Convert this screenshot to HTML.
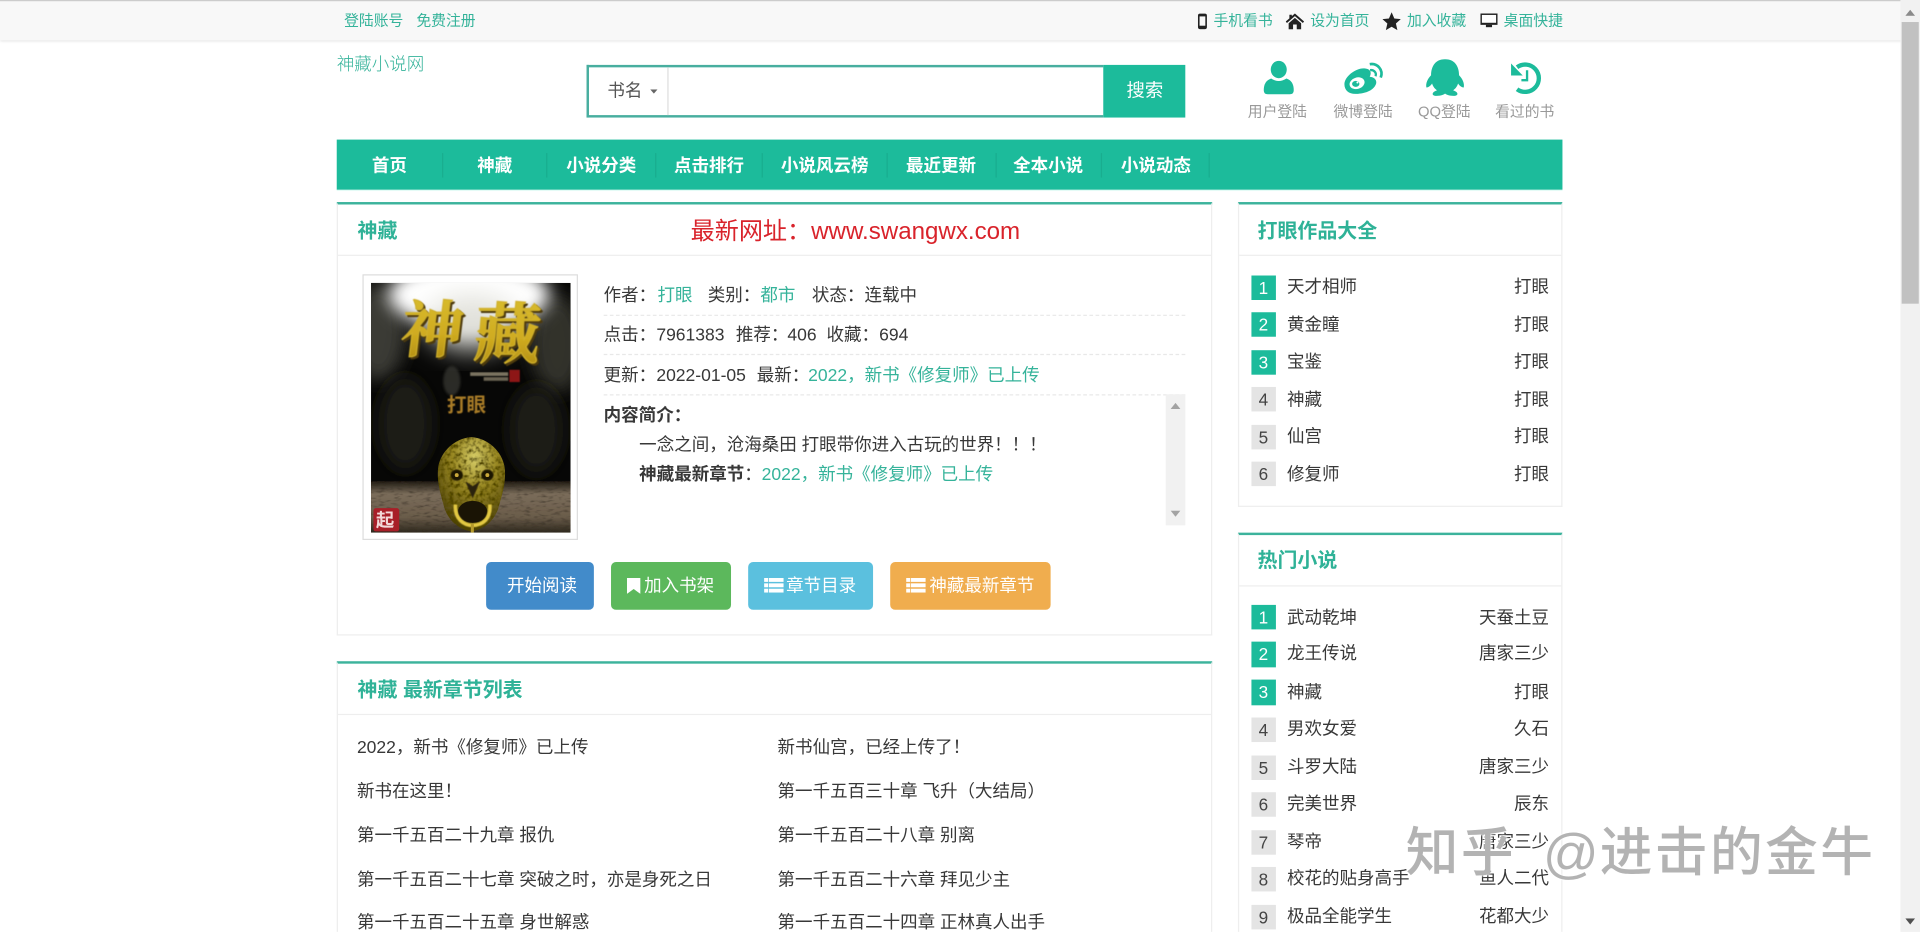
<!DOCTYPE html>
<html lang="zh"><head><meta charset="utf-8"><title>神藏小说网</title>
<style>
html,body{margin:0;padding:0;width:1920px;height:932px;overflow:hidden;background:#fff}
#p{position:absolute;left:0;top:0;width:1568px;height:761.2px;overflow:hidden;transform:scale(1.22449);transform-origin:0 0;font-family:"Liberation Sans","Noto Sans CJK SC",sans-serif;font-size:14.3px;color:#383838;background:#fff}
#p div,#p svg{position:absolute}
.t{position:absolute;white-space:nowrap;line-height:20px;height:20px;margin-top:1px}
.g{color:#35b39a}
.s{font-size:12.1px;margin-top:0}
.n{color:#fff;font-weight:bold;font-size:14.3px;width:100px;text-align:center;margin-top:0}
.d{width:1px;height:20px;top:125px;background:#19ad8f}
.panel{border:1px solid #eee;border-top:2px solid #3cb39c;box-sizing:border-box;background:#fff}
.h{background:#eee;height:1px}
.tt{font-size:16.3px;font-weight:bold;color:#2fb297;margin-top:0}
.b{height:39px;top:459px;border-radius:4px}
.w{color:#fff}
.q{width:20.4px;height:20.4px;left:1021.6px;line-height:20.4px;text-align:center;background:#e4e4e4;color:#444;font-size:14px}
.q.a{background:#1cbb9b;color:#fff}
.nm{left:1051px}
.au{right:303px}
.dash{height:0;border-top:1px dashed #e8e8e8;left:493px;width:475px}
.wm{height:50px;line-height:50px;top:672px;font-size:43px;letter-spacing:2px;color:#b3b3b3;font-weight:500;margin-top:0;text-shadow:0 0 2px #fff,0 0 2px #fff}
</style></head><body><div id="p">

<!-- top bar -->
<div style="left:0;top:0;width:1568px;height:33px;background:#f8f8f8;border-top:1px solid #ccc;box-sizing:border-box;box-shadow:0 1px 2px rgba(0,0,0,.12)"></div>
<span class="t s g" style="left:281px;top:7px">登陆账号</span>
<span class="t s g" style="left:340px;top:7px">免费注册</span>
<svg style="left:978px;top:11px" width="8" height="13" viewBox="0 0 8 13"><rect x="1" y=".8" width="6" height="11.4" rx="1" fill="none" stroke="#222" stroke-width="1.3"/><rect x="1" y=".8" width="6" height="1.6" fill="#222"/><rect x="1" y="10" width="6" height="2.2" fill="#222"/></svg>
<span class="t s g" style="left:991px;top:7px">手机看书</span>
<svg style="left:1050px;top:11px" width="15" height="13" viewBox="0 0 15 13"><path d="M7.5 0 L15 6.6 L14 7.8 L7.5 2.2 L1 7.8 L0 6.6 L3 4 V1 H5 V2.2Z" fill="#222"/><path d="M2.4 8 L7.5 3.6 L12.6 8 V13 H9 V9 H6 V13 H2.4Z" fill="#222"/></svg>
<span class="t s g" style="left:1070px;top:7px">设为首页</span>
<svg style="left:1129px;top:10px" width="15" height="15" viewBox="0 0 15 15"><path d="M7.5 0 L9.7 5.1 L15 5.6 L11 9.2 L12.2 14.6 L7.5 11.8 L2.8 14.6 L4 9.2 L0 5.6 L5.3 5.1Z" fill="#222"/></svg>
<span class="t s g" style="left:1149px;top:7px">加入收藏</span>
<svg style="left:1209px;top:11px" width="14" height="12" viewBox="0 0 14 12"><rect x=".6" y=".6" width="12.8" height="8" fill="#fff" stroke="#222" stroke-width="1.2"/><rect x="0" y="7.6" width="14" height="1.6" fill="#222"/><rect x="4.5" y="9.2" width="5" height="2" fill="#222"/></svg>
<span class="t s g" style="left:1228px;top:7px">桌面快捷</span>

<span class="t g" style="left:275px;top:42.4px;font-size:14.3px;font-weight:300">神藏小说网</span>

<!-- search -->
<div style="left:479px;top:53px;width:422px;height:43px;border:2px solid #48ae9f;border-right:0;box-sizing:border-box"></div>
<div style="left:544.5px;top:55px;width:1px;height:39px;background:#ddd"></div>
<span class="t" style="left:496px;top:64px;color:#555">书名</span>
<svg style="left:531px;top:73px" width="6" height="3.5" viewBox="0 0 7 4"><path d="M0 0H7L3.5 4Z" fill="#666"/></svg>
<div style="left:901px;top:53px;width:67px;height:43px;background:#1cbb9b"></div>
<span class="t w" style="left:920px;top:64px;font-size:15px">搜索</span>

<!-- login icons -->
<svg style="left:1012.65px;top:40.83px" width="269.5" height="65.33" viewBox="0 0 990 240" fill="#1cbb9b">
<ellipse cx="115" cy="58" rx="24" ry="26"/>
<path d="M70 120Q70 92 92 85Q115 100 138 85Q160 92 160 120Q160 132 148 132H82Q70 132 70 120Z"/>
<path d="M312 102C312 78 350 50 375 55C395 58 392 72 388 80C405 80 412 95 405 105C395 125 365 131 345 131C325 131 312 120 312 102Z"/>
<ellipse cx="350" cy="99" rx="23" ry="17" transform="rotate(-18 350 99)" fill="#fff"/>
<ellipse cx="346" cy="101" rx="11" ry="9" fill="#1cbb9b"/><circle cx="351" cy="97" r="3" fill="#fff"/>
<path d="M388 42C410 38 430 58 421 82" fill="none" stroke="#1cbb9b" stroke-width="8"/>
<path d="M389 60C400 58 410 68 405 78" fill="none" stroke="#1cbb9b" stroke-width="7"/>
<path d="M614 27C580 27 572 55 572 75C562 85 555 100 558 112C565 112 572 105 575 100C578 110 585 118 590 120C575 125 572 135 585 137C600 138 612 133 614 130C616 133 628 138 643 137C656 135 653 125 638 120C643 118 650 110 653 100C656 105 663 112 670 112C673 100 666 85 656 75C656 55 648 27 614 27Z"/>
<path d="M830 51A41 41 0 1 1 830 117" fill="none" stroke="#1cbb9b" stroke-width="13"/>
<path d="M812 40V76H847Z"/>
<path d="M860 60V90H843" fill="none" stroke="#1cbb9b" stroke-width="7"/>
</svg>
<span class="t s" style="left:1019px;top:80.8px;color:#999">用户登陆</span>
<span class="t s" style="left:1089px;top:80.8px;color:#999">微博登陆</span>
<span class="t s" style="left:1158px;top:80.8px;color:#999">QQ登陆</span>
<span class="t s" style="left:1221px;top:80.8px;color:#999">看过的书</span>

<!-- nav -->
<div style="left:275px;top:114px;width:1001px;height:41px;background:#1cbb9b"></div>
<div style="left:275px;top:155px;width:1001px;height:1px;background:#e4fbf6"></div>
<span class="t n" style="left:268px;top:125.8px">首页</span>
<span class="t n" style="left:354px;top:125.8px">神藏</span>
<span class="t n" style="left:441px;top:125.8px">小说分类</span>
<span class="t n" style="left:529px;top:125.8px">点击排行</span>
<span class="t n" style="left:623.5px;top:125.8px">小说风云榜</span>
<span class="t n" style="left:718.5px;top:125.8px">最近更新</span>
<span class="t n" style="left:806px;top:125.8px">全本小说</span>
<span class="t n" style="left:894px;top:125.8px">小说动态</span>
<div class="d" style="left:360.5px"></div><div class="d" style="left:446px"></div><div class="d" style="left:534.5px"></div><div class="d" style="left:622px"></div><div class="d" style="left:723.5px"></div><div class="d" style="left:812.5px"></div><div class="d" style="left:899px"></div><div class="d" style="left:987px"></div>

<!-- main panel 1 -->
<div class="panel" style="left:275px;top:165px;width:715px;height:354px"></div>
<div class="h" style="left:276px;top:208px;width:713px"></div>
<span class="t tt" style="left:292px;top:178.5px">神藏</span>
<span class="t" style="left:564px;top:178.5px;margin-top:0;font-size:19.7px;color:#d9232b">最新网址：www.swangwx.com</span>

<!-- cover -->
<div style="left:296px;top:224px;width:176px;height:216.5px;border:1px solid #ddd;box-sizing:border-box"></div>
<svg style="left:303px;top:230.6px" width="163" height="204" viewBox="0 0 163 204">
<defs>
<filter id="b1" x="-40%" y="-40%" width="180%" height="180%"><feGaussianBlur stdDeviation="7"/></filter>
<filter id="b4" x="-40%" y="-40%" width="180%" height="180%"><feGaussianBlur stdDeviation="11"/></filter>
<filter id="b2"><feGaussianBlur stdDeviation="1"/></filter>
<filter id="b3" x="-20%" y="-20%" width="140%" height="140%"><feGaussianBlur stdDeviation=".45"/></filter>
<filter id="tx" x="0" y="0" width="100%" height="100%"><feTurbulence type="fractalNoise" baseFrequency=".28" numOctaves="2" seed="4" result="n"/><feColorMatrix in="n" values="0 0 0 0 .08 0 0 0 0 .06 0 0 0 0 0 2.6 0 0 0 -1.05" result="m"/><feComposite in="m" in2="SourceAlpha" operator="in" result="c"/><feMerge><feMergeNode in="SourceGraphic"/><feMergeNode in="c"/></feMerge></filter>
<filter id="tg" x="0" y="0" width="100%" height="100%"><feTurbulence type="fractalNoise" baseFrequency=".16 .5" numOctaves="2" seed="9" result="n"/><feColorMatrix in="n" values="0 0 0 0 .04 0 0 0 0 .03 0 0 0 0 .02 2 0 0 0 -1" result="m"/><feComposite in="m" in2="SourceAlpha" operator="in" result="c"/><feMerge><feMergeNode in="SourceGraphic"/><feMergeNode in="c"/></feMerge></filter>
<linearGradient id="gd" x1="0" y1="0" x2="0" y2="1"><stop offset="0" stop-color="#dcc234"/><stop offset=".6" stop-color="#cfab20"/><stop offset="1" stop-color="#a98612"/></linearGradient>
<radialGradient id="sk" cx=".55" cy=".22" r=".75"><stop offset="0" stop-color="#d6cc66"/><stop offset=".45" stop-color="#978622"/><stop offset="1" stop-color="#4e430f"/></radialGradient>
<linearGradient id="gr" x1="0" y1="0" x2="0" y2="1"><stop offset="0" stop-color="#1e1a12"/><stop offset=".25" stop-color="#7a6c5a"/><stop offset=".7" stop-color="#6a5c4a"/><stop offset="1" stop-color="#2e281e"/></linearGradient>
<clipPath id="cc"><rect width="163" height="204"/></clipPath>
</defs>
<g clip-path="url(#cc)">
<rect width="163" height="204" fill="#070706"/>
<ellipse cx="6" cy="40" rx="22" ry="40" fill="#3a3a34" filter="url(#b1)"/>
<ellipse cx="152" cy="50" rx="22" ry="40" fill="#33332c" filter="url(#b1)"/>
<ellipse cx="28" cy="115" rx="22" ry="38" fill="#1d1d19" filter="url(#b1)"/>
<ellipse cx="135" cy="120" rx="22" ry="36" fill="#1a1a16" filter="url(#b1)"/>
<ellipse cx="80" cy="10" rx="66" ry="28" fill="#fff" filter="url(#b1)"/>
<ellipse cx="82" cy="32" rx="38" ry="22" fill="#e2e2dc" filter="url(#b4)"/>
<ellipse cx="66" cy="80" rx="7" ry="12" fill="#3a3a34" filter="url(#b2)" opacity=".7"/>
<rect x="0" y="162" width="163" height="42" fill="url(#gr)" filter="url(#tg)"/>
<g transform="translate(1.5 1.5)" fill="#4d3a08" stroke="#4d3a08" stroke-width="1" font-family="'Noto Serif CJK SC',serif" font-weight="bold" filter="url(#b3)">
<text transform="translate(23 56) skewX(-7)" font-size="50">神</text>
<text transform="translate(83 61) skewX(-5)" font-size="54">藏</text></g>
<g fill="url(#gd)" stroke="#d0b02a" stroke-width="1" font-family="'Noto Serif CJK SC',serif" font-weight="bold" filter="url(#b3)">
<text transform="translate(23 56) skewX(-7)" font-size="50">神</text>
<text transform="translate(83 61) skewX(-5)" font-size="54">藏</text></g>
<rect x="81" y="73" width="31" height="3" fill="#7a7360" filter="url(#b3)"/>
<rect x="92" y="77" width="20" height="3" fill="#6a6352" filter="url(#b3)"/>
<rect x="113" y="71" width="8.5" height="10" fill="#8d1414" filter="url(#b3)"/>
<text x="62" y="105" font-family="'Noto Sans CJK SC',sans-serif" font-weight="bold" font-size="16" fill="#a87b28" filter="url(#b3)">打眼</text>
<path d="M82 126C96 127 107 138 109 150C111 162 106 176 104 184C100 196 90 202 82 203C74 202 64 196 60 184C58 176 53 162 55 150C57 138 68 127 82 126Z" fill="url(#sk)" filter="url(#tx)"/>
<ellipse cx="70" cy="157" rx="5" ry="4.5" fill="#1c1405" filter="url(#b3)"/><ellipse cx="95" cy="157" rx="5" ry="4.5" fill="#1c1405" filter="url(#b3)"/>
<circle cx="70" cy="157" r="1.6" fill="#c9a83a"/><circle cx="95" cy="157" r="1.6" fill="#c9a83a"/>
<path d="M77 162L83 176L89 162L83 166Z" fill="#2a2008" filter="url(#b3)"/>
<ellipse cx="83" cy="187" rx="12" ry="9" fill="#1a1405"/>
<path d="M69 181C68 193 76 198 83 198C91 198 98 193 97 181" fill="none" stroke="#e2c843" stroke-width="3" filter="url(#b3)"/>
<rect x="81.5" y="197" width="2.5" height="7" fill="#b59a2c"/>
<rect x="2" y="184" width="21" height="19" rx="2" fill="#a81f28"/>
<text x="4" y="199" font-size="15" font-family="'Noto Sans CJK SC',sans-serif" fill="#f2d8d8" font-weight="bold">起</text>
</g></svg>

<!-- info -->
<span class="t" style="left:493px;top:231px">作者：</span><span class="t g" style="left:537px;top:231px">打眼</span>
<span class="t" style="left:578px;top:231px">类别：</span><span class="t g" style="left:621px;top:231px">都市</span>
<span class="t" style="left:663px;top:231px">状态：</span><span class="t" style="left:706px;top:231px">连载中</span>
<div class="dash" style="top:257px"></div>
<span class="t" style="left:493px;top:263px">点击：</span><span class="t" style="left:536px;top:263px">7961383</span>
<span class="t" style="left:601px;top:263px">推荐：</span><span class="t" style="left:643px;top:263px">406</span>
<span class="t" style="left:675px;top:263px">收藏：</span><span class="t" style="left:718px;top:263px">694</span>
<div class="dash" style="top:289px"></div>
<span class="t" style="left:493px;top:296px">更新：</span><span class="t" style="left:536px;top:296px">2022-01-05</span>
<span class="t" style="left:618px;top:296px">最新：</span><span class="t g" style="left:660px;top:296px">2022，新书《修复师》已上传</span>
<div class="dash" style="top:322px"></div>
<div style="left:951.5px;top:322px;width:16.5px;height:107px;background:#f1f1f1"></div>
<svg style="left:956px;top:329px" width="8" height="5"><path d="M0 5H8L4 0Z" fill="#a3a3a3"/></svg>
<svg style="left:956px;top:417px" width="8" height="5"><path d="M0 0H8L4 5Z" fill="#a3a3a3"/></svg>
<span class="t" style="left:493px;top:329px;font-weight:bold">内容简介：</span>
<span class="t" style="left:522px;top:353px">一念之间，沧海桑田 打眼带你进入古玩的世界！！！</span>
<span class="t" style="left:522px;top:377px"><b>神藏最新章节</b>：</span><span class="t g" style="left:622px;top:377px">2022，新书《修复师》已上传</span>

<!-- buttons -->
<div class="b" style="left:397px;width:88px;background:#428bca"></div>
<span class="t w" style="left:414px;top:468px">开始阅读</span>
<div class="b" style="left:499px;width:98px;background:#5cb85c"></div>
<svg style="left:512px;top:472px" width="11" height="13" viewBox="0 0 11 13"><path d="M0 0H11V13L5.5 9L0 13Z" fill="#fff"/></svg>
<span class="t w" style="left:526px;top:468px">加入书架</span>
<div class="b" style="left:611px;width:102px;background:#5bc0de"></div>
<svg style="left:624px;top:471.5px" width="16" height="12" viewBox="0 0 16 12" fill="#fff"><rect width="3.4" height="3.2"/><rect x="4" width="12" height="3.2"/><rect y="4.4" width="3.4" height="3.2"/><rect x="4" y="4.4" width="12" height="3.2"/><rect y="8.8" width="3.4" height="3.2"/><rect x="4" y="8.8" width="12" height="3.2"/></svg>
<span class="t w" style="left:642px;top:468px">章节目录</span>
<div class="b" style="left:727px;width:131px;background:#f0ad4e"></div>
<svg style="left:740px;top:471.5px" width="16" height="12" viewBox="0 0 16 12" fill="#fff"><rect width="3.4" height="3.2"/><rect x="4" width="12" height="3.2"/><rect y="4.4" width="3.4" height="3.2"/><rect x="4" y="4.4" width="12" height="3.2"/><rect y="8.8" width="3.4" height="3.2"/><rect x="4" y="8.8" width="12" height="3.2"/></svg>
<span class="t w" style="left:759px;top:468px">神藏最新章节</span>

<!-- main panel 2 -->
<div class="panel" style="left:275px;top:540px;width:715px;height:240px"></div>
<div class="h" style="left:276px;top:583px;width:713px"></div>
<span class="t tt" style="left:292px;top:553.5px">神藏 最新章节列表</span>
<span class="t" style="left:291.5px;top:600px">2022，新书《修复师》已上传</span><span class="t" style="left:635px;top:600px">新书仙宫，已经上传了！</span>
<span class="t" style="left:291.5px;top:636px">新书在这里！</span><span class="t" style="left:635px;top:636px">第一千五百三十章 飞升（大结局）</span>
<span class="t" style="left:291.5px;top:672px">第一千五百二十九章 报仇</span><span class="t" style="left:635px;top:672px">第一千五百二十八章 别离</span>
<span class="t" style="left:291.5px;top:708px">第一千五百二十七章 突破之时，亦是身死之日</span><span class="t" style="left:635px;top:708px">第一千五百二十六章 拜见少主</span>
<span class="t" style="left:291.5px;top:743px">第一千五百二十五章 身世解惑</span><span class="t" style="left:635px;top:743px">第一千五百二十四章 正林真人出手</span>

<!-- side panel 1 -->
<div class="panel" style="left:1010.5px;top:165px;width:265.5px;height:248.5px"></div>
<div class="h" style="left:1011.5px;top:208px;width:263.5px"></div>
<span class="t tt" style="left:1027px;top:178.5px">打眼作品大全</span>
<div class="q a" style="top:224.6px">1</div><span class="t nm" style="top:224px">天才相师</span><span class="t au" style="top:224px">打眼</span>
<div class="q a" style="top:255px">2</div><span class="t nm" style="top:254.5px">黄金瞳</span><span class="t au" style="top:254.5px">打眼</span>
<div class="q a" style="top:286px">3</div><span class="t nm" style="top:285px">宝鉴</span><span class="t au" style="top:285px">打眼</span>
<div class="q" style="top:316px">4</div><span class="t nm" style="top:315.5px">神藏</span><span class="t au" style="top:315.5px">打眼</span>
<div class="q" style="top:347px">5</div><span class="t nm" style="top:346px">仙宫</span><span class="t au" style="top:346px">打眼</span>
<div class="q" style="top:377px">6</div><span class="t nm" style="top:377px">修复师</span><span class="t au" style="top:377px">打眼</span>

<!-- side panel 2 -->
<div class="panel" style="left:1010.5px;top:434.5px;width:265.5px;height:340px"></div>
<div class="h" style="left:1011.5px;top:478px;width:263.5px"></div>
<span class="t tt" style="left:1027px;top:447.5px">热门小说</span>
<div class="q a" style="top:494px">1</div><span class="t nm" style="top:493.5px">武动乾坤</span><span class="t au" style="top:493.5px">天蚕土豆</span>
<div class="q a" style="top:524.3px">2</div><span class="t nm" style="top:523px">龙王传说</span><span class="t au" style="top:523px">唐家三少</span>
<div class="q a" style="top:555.3px">3</div><span class="t nm" style="top:554.5px">神藏</span><span class="t au" style="top:554.5px">打眼</span>
<div class="q" style="top:585.6px">4</div><span class="t nm" style="top:584.7px">男欢女爱</span><span class="t au" style="top:584.7px">久石</span>
<div class="q" style="top:616.6px">5</div><span class="t nm" style="top:615.5px">斗罗大陆</span><span class="t au" style="top:615.5px">唐家三少</span>
<div class="q" style="top:646.8px">6</div><span class="t nm" style="top:645.7px">完美世界</span><span class="t au" style="top:645.7px">辰东</span>
<div class="q" style="top:677.8px">7</div><span class="t nm" style="top:676.5px">琴帝</span><span class="t au" style="top:676.5px">唐家三少</span>
<div class="q" style="top:708px">8</div><span class="t nm" style="top:707.4px">校花的贴身高手</span><span class="t au" style="top:707.4px">鱼人二代</span>
<div class="q" style="top:739px">9</div><span class="t nm" style="top:738px">极品全能学生</span><span class="t au" style="top:738px">花都大少</span>

<!-- page scrollbar -->
<div style="left:1551.5px;top:0;width:16.5px;height:762px;background:#f1f1f1"></div>
<div style="left:1552.8px;top:18px;width:14px;height:230px;background:#c1c1c1"></div>
<svg style="left:1555.5px;top:7.5px" width="8" height="5"><path d="M0 5H8L4 0Z" fill="#8a8a8a"/></svg>
<svg style="left:1555.5px;top:750px" width="8" height="5"><path d="M0 0H8L4 5Z" fill="#505050"/></svg>

<!-- watermark -->
<span class="t wm" style="left:1148px">知乎</span>
<span class="t wm" style="left:1260px;font-size:45px">@</span>
<span class="t wm" style="left:1306.5px">进击的金牛</span>

</div></body></html>
